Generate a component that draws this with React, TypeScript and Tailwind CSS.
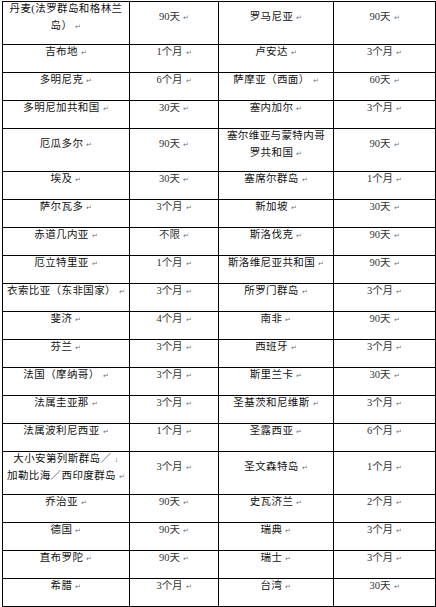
import React from "react";

type Row = [React.ReactNode, string, React.ReactNode, string];

const Mark = () => (
  <span className="ml-[3px] text-[7px] leading-none text-gray-500">↵</span>
);

const rows: Row[] = [
  [<>丹麦(法罗群岛和格林兰<br />岛）</>, "90天", "罗马尼亚", "90天"],
  ["吉布地", "1个月", "卢安达", "3个月"],
  ["多明尼克", "6个月", "萨摩亚（西面）", "60天"],
  ["多明尼加共和国", "30天", "塞内加尔", "3个月"],
  ["厄瓜多尔", "90天", <>塞尔维亚与蒙特内哥<br />罗共和国</>, "90天"],
  ["埃及", "30天", "塞席尔群岛", "1个月"],
  ["萨尔瓦多", "3个月", "新加坡", "30天"],
  ["赤道几内亚", "不限", "斯洛伐克", "90天"],
  ["厄立特里亚", "1个月", "斯洛维尼亚共和国", "90天"],
  ["衣索比亚（东非国家）", "3个月", "所罗门群岛", "3个月"],
  ["斐济", "4个月", "南非", "90天"],
  ["芬兰", "3个月", "西班牙", "3个月"],
  ["法国（摩纳哥）", "3个月", "斯里兰卡", "30天"],
  ["法属圭亚那", "3个月", "圣基茨和尼维斯", "3个月"],
  ["法属波利尼西亚", "1个月", "圣露西亚", "6个月"],
  [
    <>
      大小安第列斯群岛／<span className="ml-[3px] text-[8px] leading-none text-gray-500">↓</span>
      <br />加勒比海／西印度群岛
    </>,
    "3个月",
    "圣文森特岛",
    "1个月",
  ],
  ["乔治亚", "90天", "史瓦济兰", "2个月"],
  ["德国", "90天", "瑞典", "3个月"],
  ["直布罗陀", "90天", "瑞士", "3个月"],
  ["希腊", "3个月", "台湾", "30天"],
];

const cell =
  "border border-black text-center align-middle px-[4px] pt-0 pb-[12px]";

export default function App() {
  return (
    <div
      className="bg-white w-[436px] h-[607px] overflow-hidden pt-[1px] pl-[2px]"
      style={{ fontFamily: '"Liberation Serif", "Noto Sans CJK SC", sans-serif' }}
    >
      <table className="border-collapse table-fixed w-[433px] text-[10.5px] text-[#111]">
        <colgroup>
          <col className="w-[127px]" />
          <col className="w-[89px]" />
          <col className="w-[115px]" />
          <col className="w-[102px]" />
        </colgroup>
        <tbody>
          {rows.map((r, i) => (
            <tr key={i}>
              {r.map((c, j) => (
                <td key={j} className={cell}>
                  <div className="-mt-[2px] leading-[17px] max-h-[32px] overflow-visible">
                    <span className={j % 2 === 0 ? "tracking-[0.4px]" : "text-[#333]"}>{c}</span>
                    <Mark />
                  </div>
                </td>
              ))}
            </tr>
          ))}
        </tbody>
      </table>
    </div>
  );
}
